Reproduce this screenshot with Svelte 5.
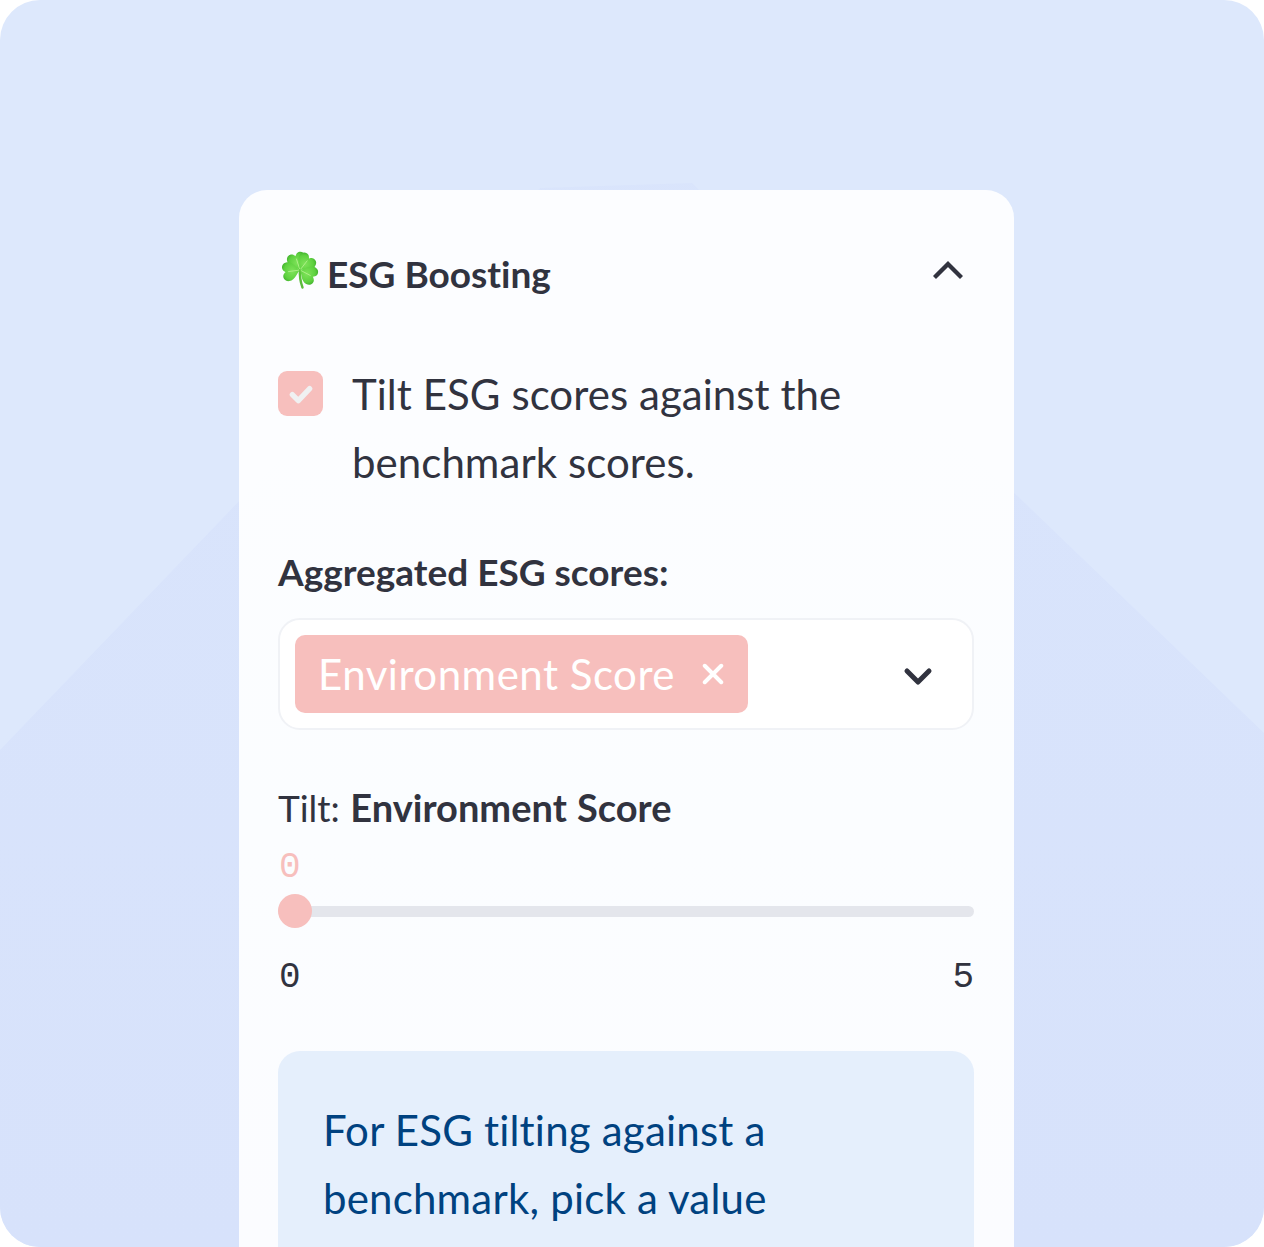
<script>
	let title = 'ESG Boosting';
	let tiltLabel = 'Tilt ESG scores against the benchmark scores.';
	let selected = 'Environment Score';
	const heart = 'M0 0C-2 -3 -9.5 -6 -9.5 -12C-9.5 -16.5 -5.5 -18.5 -2.5 -17C-1 -16.2 0 -14.5 0 -14.5C0 -14.5 1 -16.2 2.5 -17C5.5 -18.5 9.5 -16.5 9.5 -12C9.5 -6 2 -3 0 0Z';
	const leaves = [-18, 38, -98, 118];
</script>

<div class="frame">
	<div class="mountain"></div>
	<section class="card">
		<header class="head">
			<h2>
				<svg class="clover" viewBox="-20 -20 40 40" aria-hidden="true">
					<defs>
						<radialGradient id="leaf" cx="0.5" cy="0.55" r="0.7">
							<stop offset="0" stop-color="#7fe35a" />
							<stop offset="0.65" stop-color="#5ed13f" />
							<stop offset="1" stop-color="#3aa82a" />
						</radialGradient>
					</defs>
					<path d="M0 0C-0.5 6 0.5 12 2.5 17.5" fill="none" stroke="#5cbb3c" stroke-width="2.4" stroke-linecap="round" />
					{#each leaves as a}
						<path d={heart} transform="rotate({a})" fill="url(#leaf)" />
						<path d="M0 -1V-12" transform="rotate({a})" stroke="#b4f08e" stroke-width="0.8" fill="none" />
					{/each}
				</svg>
				<span>{title}</span>
			</h2>
			<svg class="chev-up" viewBox="0 0 30 20" aria-hidden="true">
				<path d="M3 16L15 4L27 16" fill="none" stroke="#31333f" stroke-width="4.4" stroke-linecap="square" stroke-linejoin="miter" />
			</svg>
		</header>

		<div class="check-row">
			<span class="box">
				<svg viewBox="0 0 24 24" aria-hidden="true">
					<path d="M5.5 12.5L10 17L18.5 8" fill="none" stroke="#f0f1f2" stroke-width="4" stroke-linecap="round" stroke-linejoin="round" />
				</svg>
			</span>
			<p>{tiltLabel}</p>
		</div>

		<div class="field-label">Aggregated ESG scores:</div>
		<div class="select">
			<span class="tag">
				<span>{selected}</span>
				<svg viewBox="0 0 20 20" aria-hidden="true">
					<path d="M2.5 2.5L17.5 17.5M17.5 2.5L2.5 17.5" fill="none" stroke="#fff" stroke-width="3.6" stroke-linecap="round" />
				</svg>
			</span>
			<svg class="chev-down" viewBox="0 0 30 20" aria-hidden="true">
				<path d="M4 5L15 16L26 5" fill="none" stroke="#31333f" stroke-width="5" stroke-linecap="round" stroke-linejoin="round" />
			</svg>
		</div>

		<div class="tilt-label">Tilt: <b>{selected}</b></div>
		<div class="value">0</div>
		<div class="track"><span class="thumb"></span></div>
		<div class="ends">
			<span>0</span>
			<span>5</span>
		</div>

		<div class="info">For ESG tilting against a benchmark, pick a value</div>
	</section>
</div>

<style>
	:global(body) {
		background: #fff;
		overflow: hidden;
	}
	.frame {
		position: relative;
		box-sizing: border-box;
		width: 1264px;
		height: 1247px;
		padding: 190px 250px 0 239px;
		overflow: hidden;
		border-radius: 40px;
		background: #dde8fc;
		font-family: 'Lato', sans-serif;
		font-variant-ligatures: none;
		color: #31333f;
	}
	.mountain {
		position: absolute;
		inset: 0;
		background: linear-gradient(180deg, #dae5fc 0%, #d7e2fb 100%);
		clip-path: polygon(0 750px, 540px 188px, 692px 183px, 1264px 733px, 1264px 1247px, 0 1247px);
	}
	.card {
		position: relative;
		box-sizing: border-box;
		width: 775px;
		height: 1100px;
		padding: 56px 39px 0;
		border-radius: 28px;
		background: rgba(255, 255, 255, 0.9);
	}
	.head {
		display: flex;
		justify-content: space-between;
		align-items: flex-start;
		height: 125px;
	}
	h2 {
		display: flex;
		align-items: flex-start;
		gap: 7px;
		margin: 0;
		font-size: 37px;
		line-height: 56px;
		font-weight: 700;
	}
	.clover {
		width: 40px;
		height: 40px;
		margin: 4px 0 0 2px;
		flex: none;
	}
	.chev-up {
		width: 30px;
		height: 20px;
		margin: 14px 12px 0 0;
	}
	.check-row {
		display: flex;
		gap: 29px;
		height: 181px;
	}
	.box {
		display: flex;
		align-items: center;
		justify-content: center;
		flex: none;
		width: 45px;
		height: 45px;
		border-radius: 9px;
		background: #f7bfbd;
	}
	.box svg {
		width: 32px;
		height: 32px;
	}
	.check-row p {
		margin: -11px 0 0;
		font-size: 42px;
		line-height: 68px;
		letter-spacing: 0.05px;
	}
	.field-label {
		font-size: 37px;
		line-height: 50px;
		font-weight: 700;
		margin-top: -5px;
		margin-bottom: 21px;
	}
	.select {
		display: flex;
		align-items: center;
		justify-content: space-between;
		box-sizing: border-box;
		width: 696px;
		height: 112px;
		padding: 0 39px 0 15px;
		border: 2px solid #f0f2f6;
		border-radius: 22px;
		background: #fff;
	}
	.tag {
		display: flex;
		align-items: center;
		gap: 27px;
		height: 78px;
		padding: 0 24px 0 23px;
		border-radius: 10px;
		background: #f7bfbd;
		color: #fff;
		font-size: 42px;
		letter-spacing: 0.5px;
	}
	.tag svg {
		width: 22px;
		height: 22px;
	}
	.chev-down {
		width: 30px;
		height: 20px;
		margin-top: 3px;
	}
	.tilt-label {
		margin-top: 52px;
		font-size: 37px;
		line-height: 50px;
		word-spacing: 1px;
	}
	.tilt-label b {
		font-weight: 700;
		font-size: 38px;
	}
	.value {
		margin-top: 17px;
		padding-left: 1px;
		font-family: 'Liberation Mono', monospace;
		font-size: 36px;
		line-height: 36px;
		color: #f7bfbd;
	}
	.track {
		position: relative;
		width: 696px;
		height: 11px;
		margin-top: 20px;
		border-radius: 6px;
		background: #e4e6ec;
	}
	.thumb {
		position: absolute;
		left: 0;
		top: -12px;
		width: 34px;
		height: 34px;
		border-radius: 50%;
		background: #f7bfbd;
	}
	.ends {
		display: flex;
		justify-content: space-between;
		box-sizing: border-box;
		width: 696px;
		margin-top: 36px;
		padding-left: 1px;
		font-family: 'Liberation Mono', monospace;
		font-size: 36px;
		line-height: 50px;
	}
	.info {
		box-sizing: border-box;
		width: 696px;
		height: 300px;
		margin-top: 48px;
		padding: 45px 45px;
		border-radius: 22px;
		background: #e5effc;
		color: #004280;
		font-size: 42px;
		line-height: 68px;
		letter-spacing: 0.2px;
	}
</style>
